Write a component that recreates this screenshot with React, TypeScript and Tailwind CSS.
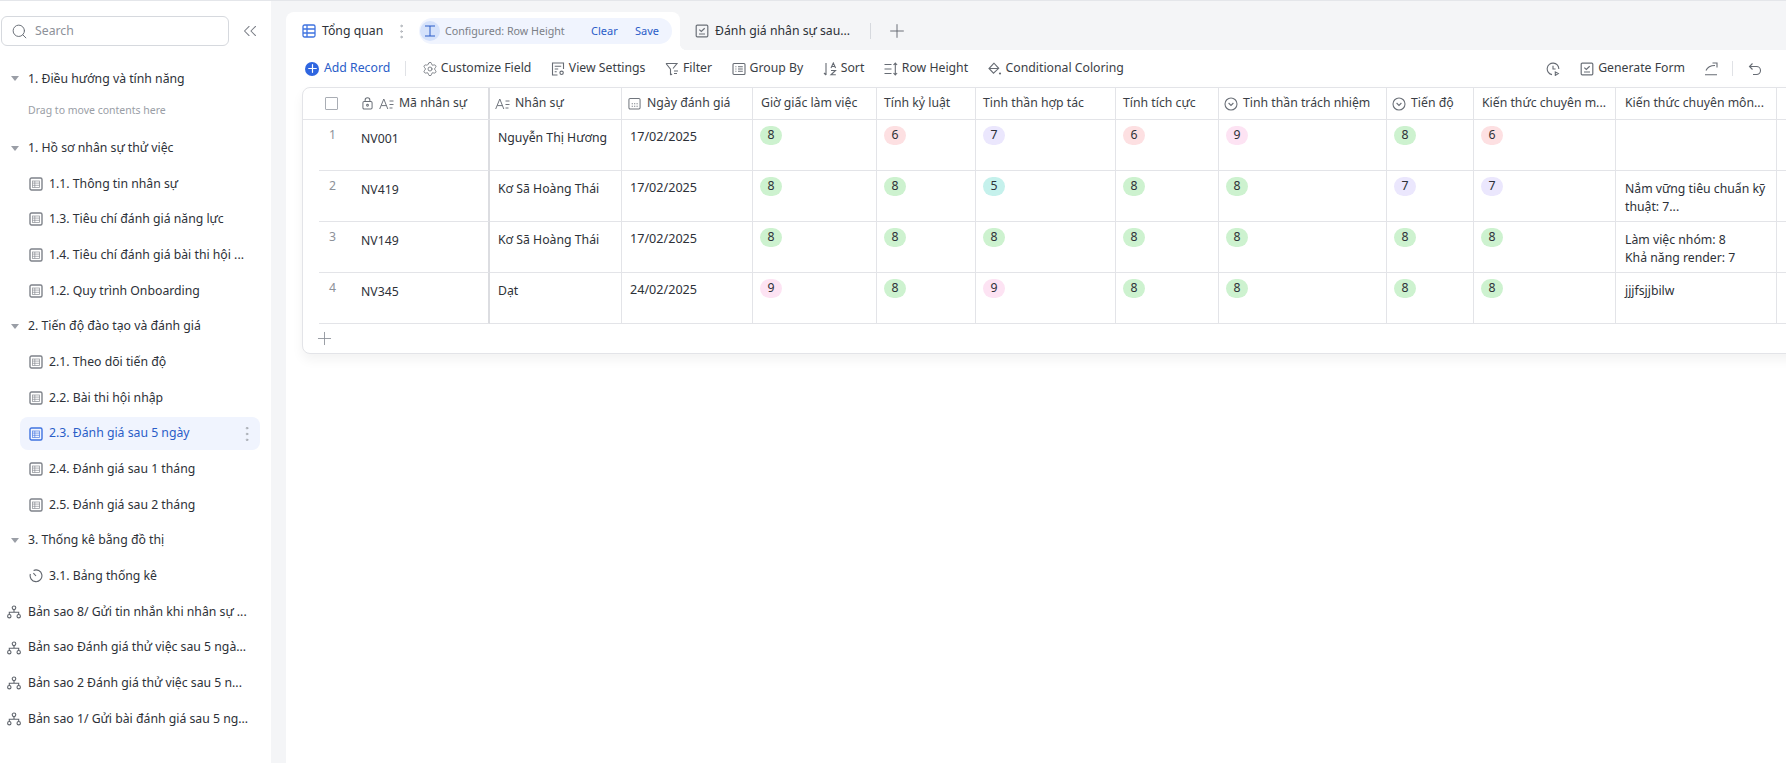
import { ChevronsLeft, Plus, Search, Settings, EllipsisVertical } from "lucide-react";

type IconProps = { className?: string };

function GridIcon({ className = "" }: IconProps) {
  return (
    <svg viewBox="0 0 14 14" className={`h-[14px] w-[14px] shrink-0 ${className}`} fill="none" stroke="currentColor">
      <rect x="1" y="1" width="12" height="12" rx="1.5" strokeWidth="1.4" />
      <rect x="3.5" y="4" width="7" height="6.4" strokeWidth="0.8" opacity="0.8" />
      <path d="M3.5 6.1h7M3.5 8.3h7M5.8 4v6.4" strokeWidth="0.8" opacity="0.8" />
    </svg>
  );
}

function TableTabIcon() {
  return (
    <svg viewBox="0 0 14 14" className="h-[14px] w-[14px] shrink-0 text-[#3f73e0]" fill="none" stroke="currentColor" strokeWidth="1.3">
      <rect x="1" y="1" width="12" height="12" rx="1.5" />
      <path d="M1 5h12M1 9h12M5 1v12" />
    </svg>
  );
}

function FormIcon() {
  return (
    <svg viewBox="0 0 14 14" className="h-[14px] w-[14px] shrink-0 text-[#6b7078]" fill="none" stroke="currentColor" strokeWidth="1.2">
      <rect x="1.2" y="1.2" width="11.6" height="11.6" rx="1" />
      <path d="M4.3 5.6l2 1.9 3.4-3.3M4 10h6" />
    </svg>
  );
}

function TreeIcon() {
  return (
    <svg viewBox="0 0 14 14" className="h-[14px] w-[14px] shrink-0 text-[#5f646c]" fill="none" stroke="currentColor" strokeWidth="1.1">
      <circle cx="7" cy="2.8" r="1.8" />
      <circle cx="2.3" cy="11.2" r="1.7" />
      <circle cx="11.7" cy="11.2" r="1.7" />
      <path d="M7 4.6v2.6M2.3 9.5V7.2h9.4v2.3" />
    </svg>
  );
}

function TimerIcon() {
  return (
    <svg viewBox="0 0 14 14" className="h-[14px] w-[14px] shrink-0 text-[#5f646c]" fill="none" stroke="currentColor" strokeWidth="1.1">
      <path d="M4.6 1.4A5.9 5.9 0 1 1 1.4 5" />
      <path d="M4.4 4.2L7 7" />
    </svg>
  );
}

function TextFieldIcon() {
  return (
    <svg viewBox="0 0 15 12" className="h-[12px] w-[15px] shrink-0 text-[#70757d]" fill="none" stroke="currentColor" strokeWidth="1">
      <path d="M0.7 11L4.8 1l4 10M2.2 7.6h5.2M10.5 3h4M10.5 6.5h4M10.5 10h3" />
    </svg>
  );
}

function LockIcon() {
  return (
    <svg viewBox="0 0 12 14" className="h-[13px] w-[11px] shrink-0 text-[#6b7078]" fill="none" stroke="currentColor" strokeWidth="1.1">
      <rect x="1" y="4.8" width="10" height="8.2" rx="1.3" />
      <path d="M3.4 4.8V3.4a2.6 2.6 0 0 1 5.2 0v1.4" />
      <circle cx="6" cy="8.9" r="1" />
    </svg>
  );
}

function DateIcon() {
  return (
    <svg viewBox="0 0 14 14" className="ml-[1px] mr-[1px] h-[13px] w-[13px] shrink-0 text-[#70757d]" fill="none" stroke="currentColor" strokeWidth="1.1">
      <rect x="1" y="1.5" width="12" height="11.5" rx="1.3" />
      <path d="M4 7.2h1.2M6.6 7.2h1.2M9.2 7.2h1.2M4 10h1.2M6.6 10h1.2M9.2 10h1.2" />
    </svg>
  );
}

function SelectIcon() {
  return (
    <svg viewBox="0 0 14 14" className="h-[14px] w-[14px] shrink-0 text-[#6b7078]" fill="none" stroke="currentColor" strokeWidth="1.1">
      <circle cx="7" cy="7" r="6" />
      <path d="M4.6 6l2.4 2.4L9.4 6" />
    </svg>
  );
}

function ToolbarIcon({ name }: { name: string }) {
  const cls = "h-[14px] w-[14px] shrink-0 text-[#676c74]";
  if (name === "view")
    return (
      <svg viewBox="0 0 14 14" className={cls} fill="none" stroke="currentColor" strokeWidth="1.1">
        <path d="M6.5 13H1.5V1h11v6M3.7 4.2h6.5M3.7 7h3.5M3.7 9.8h2" />
        <circle cx="10.6" cy="10.8" r="1.7" />
      </svg>
    );
  if (name === "filter")
    return (
      <svg viewBox="0 0 14 14" className={cls} fill="none" stroke="currentColor" strokeWidth="1.1">
        <path d="M1 1.5h11L8 6.5M5.5 13V7.2L1 1.5M5.5 13l1.6-1M9 9h4M9 11.5h3" />
      </svg>
    );
  if (name === "group")
    return (
      <svg viewBox="0 0 14 14" className={cls} fill="none" stroke="currentColor" strokeWidth="1.1">
        <rect x="1" y="1.5" width="12" height="11" rx="1" />
        <path d="M3.4 4.8h1M3.4 7h1M3.4 9.2h1M6 4.8h4.8M6 7h4.8M6 9.2h4.8" />
      </svg>
    );
  if (name === "sort")
    return (
      <svg viewBox="0 0 14 14" className={cls} fill="none" stroke="currentColor" strokeWidth="1.1">
        <path d="M3 1v12M1 11l2 2M8 6l2.3-5 2.3 5M8.8 4.5h3M8 8.5h4.5L8 12.8h4.8" />
      </svg>
    );
  if (name === "height")
    return (
      <svg viewBox="0 0 14 14" className={cls} fill="none" stroke="currentColor" strokeWidth="1.1">
        <path d="M0.5 2.5h7M0.5 7h7M0.5 11.5h7M11.3 1v12M9.5 3l1.8-2 1.8 2M9.5 11l1.8 2 1.8-2" />
      </svg>
    );
  if (name === "color")
    return (
      <svg viewBox="0 0 14 14" className={cls} fill="none" stroke="currentColor" strokeWidth="1.1">
        <path d="M6 1.2L1 6.5l4.5 4.7 5.2-4.9zM1 6.5h9.7" />
        <circle cx="12" cy="11.5" r="1.1" fill="currentColor" stroke="none" />
      </svg>
    );
  if (name === "history")
    return (
      <svg viewBox="0 0 14 14" className={cls} fill="none" stroke="currentColor" strokeWidth="1.1">
        <path d="M6 12.6A5.8 5.8 0 1 1 12.8 7M7 3.8V7h2.6M9.3 10l3 1.6-3 1.8z" />
      </svg>
    );
  if (name === "share")
    return (
      <svg viewBox="0 0 16 14" className="h-[14px] w-[16px] shrink-0 text-[#676c74]" fill="none" stroke="currentColor" strokeWidth="1.1">
        <path d="M2 8.5C3.5 5 6.5 3.5 11 3.5M8.5 1H13v4.5M1 12.8h12" />
      </svg>
    );
  if (name === "undo")
    return (
      <svg viewBox="0 0 14 14" className={cls} fill="none" stroke="currentColor" strokeWidth="1.1">
        <path d="M4.5 1.5L1.5 4.5l3 3M1.5 4.5h7a4 4 0 0 1 0 8H5" />
      </svg>
    );
  return <FormIcon />;
}

function Caret() {
  return <span className="ml-[11px] mr-[9px] h-0 w-0 shrink-0 border-x-[4px] border-t-[5px] border-x-transparent border-t-[#9a9ea6]" />;
}

function GroupRow({ label }: { label: string }) {
  return (
    <div className="flex h-[35.7px] items-center">
      <Caret />
      <span className="whitespace-nowrap">{label}</span>
    </div>
  );
}

function PageRow({ label, active, icon }: { label: string; active?: boolean; icon?: "timer" }) {
  return (
    <div
      className={`relative ml-[20px] mr-[11px] flex h-[33px] my-[1.35px] items-center gap-[6px] rounded-lg pl-[9px] ${
        active ? "bg-[#f0f4fe] text-[#2a5dc8]" : ""
      }`}
    >
      {icon === "timer" ? <TimerIcon /> : <GridIcon className={active ? "text-[#3f73e0]" : "text-[#7f838a]"} />}
      <span className="whitespace-nowrap">{label}</span>
      {active && <EllipsisVertical className="absolute right-[3px] h-[20px] w-[20px] text-[#a3a7ae]" strokeWidth={1.1} />}
    </div>
  );
}

function FlowRow({ label }: { label: string }) {
  return (
    <div className="flex h-[35.7px] items-center gap-[7px] pl-[7px]">
      <TreeIcon />
      <span className="whitespace-nowrap">{label}</span>
    </div>
  );
}

function Sidebar() {
  return (
    <aside className="flex w-[271px] shrink-0 flex-col bg-white text-[12.25px] text-[#2d3138]">
      <div className="flex h-[60px] items-start pl-[1px] pt-[15px]">
        <div className="flex h-[30px] w-[228px] items-center gap-[7px] rounded-md border border-[#d6d9de] pl-[9px]">
          <Search className="h-[17px] w-[17px] text-[#6b7078]" strokeWidth={1.4} />
          <span className="text-[#8d9199]">Search</span>
        </div>
        <ChevronsLeft className="ml-[10px] mt-[4px] h-[22px] w-[22px] text-[#777b83]" strokeWidth={1.1} />
      </div>
      <GroupRow label="1. Điều hướng và tính năng" />
      <div className="flex h-[33.5px] items-start pl-[28px] pt-[6px] text-[10.5px] text-[#9a9ea6]">Drag to move contents here</div>
      <GroupRow label="1. Hồ sơ nhân sự thử việc" />
      <PageRow label="1.1. Thông tin nhân sự" />
      <PageRow label="1.3. Tiêu chí đánh giá năng lực" />
      <PageRow label="1.4. Tiêu chí đánh giá bài thi hội ..." />
      <PageRow label="1.2. Quy trình Onboarding" />
      <GroupRow label="2. Tiến độ đào tạo và đánh giá" />
      <PageRow label="2.1. Theo dõi tiến độ" />
      <PageRow label="2.2. Bài thi hội nhập" />
      <PageRow label="2.3. Đánh giá sau 5 ngày" active />
      <PageRow label="2.4. Đánh giá sau 1 tháng" />
      <PageRow label="2.5. Đánh giá sau 2 tháng" />
      <GroupRow label="3. Thống kê bằng đồ thị" />
      <PageRow label="3.1. Bảng thống kê" icon="timer" />
      <FlowRow label="Bản sao 8/ Gửi tin nhắn khi nhân sự ..." />
      <FlowRow label="Bản sao Đánh giá thử việc sau 5 ngà..." />
      <FlowRow label="Bản sao 2 Đánh giá thử việc sau 5 n..." />
      <FlowRow label="Bản sao 1/ Gửi bài đánh giá sau 5 ng..." />
    </aside>
  );
}

function TabBar() {
  return (
    <div className="flex h-[38px] items-stretch text-[12.25px] text-[#2d3138]">
      <div className="flex w-[394px] items-center rounded-t-lg bg-white pl-[16px]">
        <TableTabIcon />
        <span className="ml-[6px] w-[62px] whitespace-nowrap">Tổng quan</span>
        <EllipsisVertical className="ml-[8px] h-[19px] w-[19px] text-[#a3a7ae]" strokeWidth={1.1} />
        <div className="ml-[8px] flex h-[26px] w-[253px] items-center rounded-full bg-[#f0f4fe]">
          <span className="ml-[1px] flex h-[20px] w-[20px] items-center justify-center rounded-full bg-[#d5e2fb] text-[#2a5dc8]">
            <svg viewBox="0 0 12 12" className="h-[12px] w-[12px]" fill="none" stroke="currentColor" strokeWidth="1">
              <path d="M1 1h10M1 11h10M6 1v10" />
            </svg>
          </span>
          <span className="ml-[5px] w-[146px] whitespace-nowrap text-[10.7px] text-[#7b7f87]">Configured: Row Height</span>
          <span className="w-[44px] text-[11px] text-[#2a5dc8]">Clear</span>
          <span className="text-[11px] text-[#2a5dc8]">Save</span>
        </div>
      </div>
      <div className="relative flex items-center pl-[15px]">
        <span className="absolute bottom-0 left-0 h-[7px] w-[7px] bg-[radial-gradient(circle_at_top_right,#f4f5f7_7px,#ffffff_7.5px)]" />
        <FormIcon />
        <span className="ml-[6px] w-[137px] whitespace-nowrap">Đánh giá nhân sự sau...</span>
        <span className="ml-[18px] h-[16px] w-px bg-[#d6d9de]" />
        <Plus className="ml-[15px] h-[22px] w-[22px] text-[#5f646c]" strokeWidth={1} />
      </div>
    </div>
  );
}

function ToolItem({ icon, label }: { icon: string; label: string }) {
  return (
    <div className="flex items-center gap-[4px]">
      <ToolbarIcon name={icon} />
      <span className="whitespace-nowrap">{label}</span>
    </div>
  );
}

function Toolbar() {
  return (
    <div className="flex h-[37px] items-center justify-between pl-[19px] pr-[24px] text-[12.25px] text-[#3a3e45]">
      <div className="flex items-center gap-[19.5px]">
        <div className="-mr-[4px] flex items-center gap-[5px] text-[#2a5dc8]">
          <span className="flex h-[14px] w-[14px] items-center justify-center rounded-full bg-[#2f66e0]">
            <Plus className="h-[13px] w-[13px] text-white" strokeWidth={2.2} />
          </span>
          <span className="whitespace-nowrap">Add Record</span>
          <span className="ml-[10px] h-[15px] w-px bg-[#e0e2e6]" />
        </div>
        <div className="flex items-center gap-[3px]">
          <Settings className="h-[16px] w-[16px] text-[#676c74]" strokeWidth={1.2} />
          <span className="whitespace-nowrap">Customize Field</span>
        </div>
        <ToolItem icon="view" label="View Settings" />
        <ToolItem icon="filter" label="Filter" />
        <ToolItem icon="group" label="Group By" />
        <ToolItem icon="sort" label="Sort" />
        <ToolItem icon="height" label="Row Height" />
        <ToolItem icon="color" label="Conditional Coloring" />
      </div>
      <div className="flex items-center">
        <ToolbarIcon name="history" />
        <div className="ml-[20px]">
          <ToolItem icon="form" label="Generate Form" />
        </div>
        <div className="ml-[19px]">
          <ToolbarIcon name="share" />
        </div>
        <span className="ml-[12px] h-[15px] w-px bg-[#e0e2e6]" />
        <div className="ml-[15px]">
          <ToolbarIcon name="undo" />
        </div>
      </div>
    </div>
  );
}

const widths = {
  nhanSu: "w-[132px]",
  ngay: "w-[131px]",
  gio: "w-[124px]",
  kyLuat: "w-[99px]",
  hopTac: "w-[140px]",
  tichCuc: "w-[103px]",
  trachNhiem: "w-[168px]",
  tienDo: "w-[87px]",
  kt1: "w-[142px]",
  kt2: "w-[161px]",
};

const badgeColors: Record<string, string> = {
  "5": "bg-[#c5f1ec]",
  "6": "bg-[#fde0e2]",
  "7": "bg-[#ebe7fd]",
  "8": "bg-[#cdf2cf]",
  "9": "bg-[#fde3f3]",
};

type Row = {
  no: number;
  code: string;
  name: string;
  date: string;
  scores: string[];
  note: string[];
};

const rows: Row[] = [
  { no: 1, code: "NV001", name: "Nguyễn Thị Hương", date: "17/02/2025", scores: ["8", "6", "7", "6", "9", "8", "6"], note: [] },
  { no: 2, code: "NV419", name: "Kơ Sã Hoàng Thái", date: "17/02/2025", scores: ["8", "8", "5", "8", "8", "7", "7"], note: ["Nắm vững tiêu chuẩn kỹ", "thuật: 7..."] },
  { no: 3, code: "NV149", name: "Kơ Sã Hoàng Thái", date: "17/02/2025", scores: ["8", "8", "8", "8", "8", "8", "8"], note: ["Làm việc nhóm: 8", "Khả năng render: 7"] },
  { no: 4, code: "NV345", name: "Dạt", date: "24/02/2025", scores: ["9", "8", "9", "8", "8", "8", "8"], note: ["jjjfsjjbilw"] },
];

const scoreCols = [widths.gio, widths.kyLuat, widths.hopTac, widths.tichCuc, widths.trachNhiem, widths.tienDo, widths.kt1];

function HeaderCell({ width, label, icon, pad }: { width: string; label: string; icon?: React.ReactNode; pad?: string }) {
  return (
    <div className={`flex shrink-0 items-center gap-[5px] border-r border-[#e3e4e8] ${pad ?? (icon ? "pl-[5px]" : "pl-[7px]")} ${width}`}>
      {icon}
      <span className="whitespace-nowrap">{label}</span>
    </div>
  );
}

function Table() {
  return (
    <div className="ml-[16px] w-[1600px] rounded-lg border border-[#e3e4e8] bg-white text-[12.25px] text-[#2d3138] shadow-[0_6px_12px_rgba(0,0,0,0.05)]">
      <div className="flex h-[32px] border-b border-[#e3e4e8] text-[#3a3e45]">
        <div className="flex w-[187px] shrink-0 items-center border-r-2 border-[#dcdde1] pl-[22px]">
          <span className="h-[13px] w-[13px] rounded-[1px] border border-[#a9adb4]" />
          <span className="ml-[24px]"><LockIcon /></span>
          <span className="ml-[6px]"><TextFieldIcon /></span>
          <span className="ml-[5px] whitespace-nowrap">Mã nhân sự</span>
        </div>
        <HeaderCell width={widths.nhanSu} label="Nhân sự" icon={<TextFieldIcon />} />
        <HeaderCell width={widths.ngay} label="Ngày đánh giá" icon={<DateIcon />} />
        <HeaderCell width={widths.gio} label="Giờ giấc làm việc" pad="pl-[8px]" />
        <HeaderCell width={widths.kyLuat} label="Tính kỷ luật" />
        <HeaderCell width={widths.hopTac} label="Tinh thần hợp tác" />
        <HeaderCell width={widths.tichCuc} label="Tính tích cực" />
        <HeaderCell width={widths.trachNhiem} label="Tinh thần trách nhiệm" icon={<SelectIcon />} />
        <HeaderCell width={widths.tienDo} label="Tiến độ" icon={<SelectIcon />} />
        <HeaderCell width={widths.kt1} label="Kiến thức chuyên m..." pad="pl-[8px]" />
        <HeaderCell width={widths.kt2} label="Kiến thức chuyên môn..." pad="pl-[9px]" />
      </div>
      {rows.map((r) => (
        <div key={r.no} className="flex h-[51px]">
          <div className="flex w-[16px] shrink-0" />
          <div className="flex w-[171px] shrink-0 border-b border-r-2 border-b-[#e3e4e8] border-r-[#dcdde1]">
            <span className="w-[27px] pt-[6px] text-center text-[#8d9199]">{r.no}</span>
            <span className="pl-[15px] pt-[10px]">{r.code}</span>
          </div>
          <div className={`shrink-0 whitespace-nowrap border-b border-r border-[#e3e4e8] pl-[8px] pt-[9px] ${widths.nhanSu}`}>{r.name}</div>
          <div className={`shrink-0 border-b border-r border-[#e3e4e8] pl-[8px] pt-[8px] text-[12.6px] ${widths.ngay}`}>{r.date}</div>
          {r.scores.map((s, i) => (
            <div key={i} className={`shrink-0 border-b border-r border-[#e3e4e8] pl-[7px] pt-[6px] ${scoreCols[i]}`}>
              <span className={`flex h-[19px] w-[22px] items-center justify-center rounded-full ${badgeColors[s]}`}>{s}</span>
            </div>
          ))}
          <div className={`shrink-0 whitespace-nowrap border-b border-r border-[#e3e4e8] pl-[9px] pt-[9px] leading-[18px] ${widths.kt2}`}>
            {r.note.map((line) => (
              <div key={line}>{line}</div>
            ))}
          </div>
          <div className="w-[100px] shrink-0 border-b border-[#e3e4e8]" />
        </div>
      ))}
      <div className="flex h-[29px] items-center pl-[11px]">
        <Plus className="h-[21px] w-[21px] text-[#8d9199]" strokeWidth={1} />
      </div>
    </div>
  );
}

export default function App() {
  return (
    <div className="flex h-screen w-screen overflow-hidden border-t border-[#e4e6ea] bg-[#f4f5f7] font-['Noto_Sans',sans-serif]">
      <Sidebar />
      <main className="ml-[15px] flex min-w-0 flex-1 flex-col pt-[11px]">
        <TabBar />
        <div className="flex-1 bg-white">
          <Toolbar />
          <Table />
        </div>
      </main>
    </div>
  );
}
